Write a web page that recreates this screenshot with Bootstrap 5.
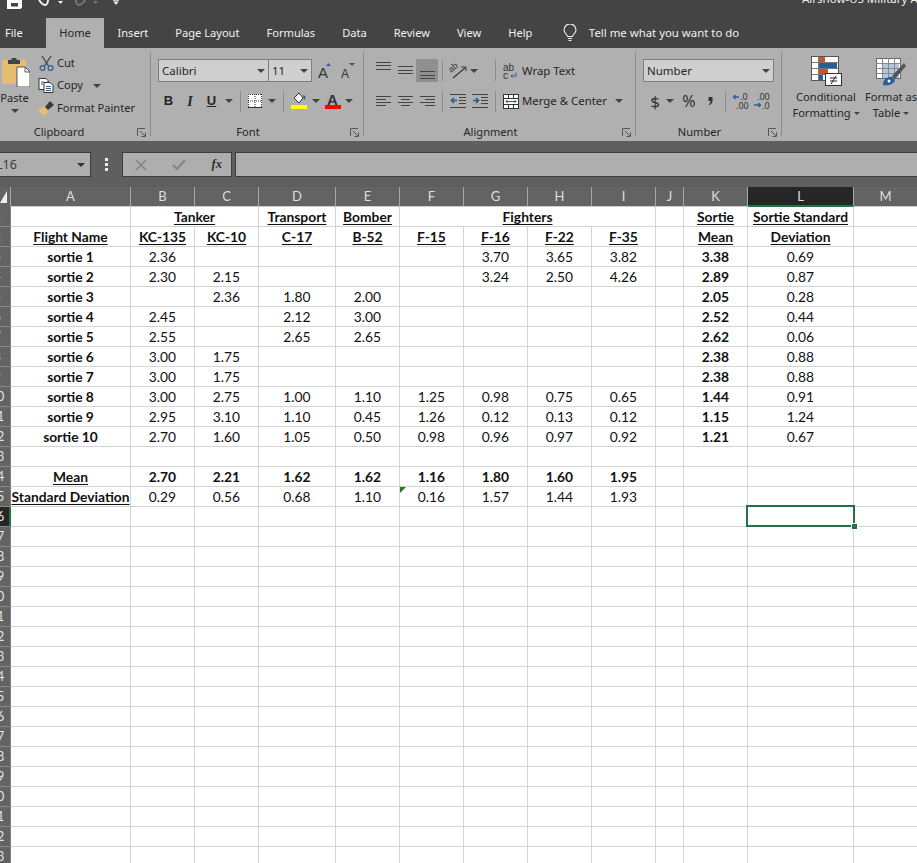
<!DOCTYPE html>
<html lang="en">
<head>
<meta charset="utf-8">
<title>Airshow-US Military Aircraft</title>
<link href="https://cdn.jsdelivr.net/npm/bootstrap@5.3.0/dist/css/bootstrap.min.css" rel="stylesheet">
<style>
html,body{height:863px;overflow:hidden;background:#fff}
body{font-family:"Noto Sans","Open Sans",sans-serif;font-size:11.1px;color:#262626}
svg{display:block;flex:none}
.title-bar{height:18px;background:#444;overflow:hidden;padding-left:7px;color:#eee}
.qa-undo{margin-left:16px}.qa-redo{margin-left:11px}.qa-more{margin-left:15px}.qa-tick{margin-left:7px;margin-top:1px}
.doc-name{margin-left:auto;margin-top:-10px;font-size:11.5px;line-height:18px;white-space:nowrap;width:115px;flex:none;overflow:hidden}
.tab-bar{height:30px;background:#444;flex-wrap:nowrap}
.tab-bar .nav-link{color:#f1f1f1;padding:0 13.5px;line-height:30px;font-size:11.1px;height:30px}
.tab-bar .tab-file{padding:0 23px 0 5px;width:46px}
.tab-bar .tab-home{background:#b0b0b0;color:#262626;width:58px;padding:0;text-align:center}
.tab-tell{color:#f1f1f1;font-size:11.4px;margin-left:17px;gap:12px;height:30px}
.ribbon{height:93px;background:#b0b0b0;padding-top:4px;overflow:hidden}
.rb-group{height:84px;border-right:1px solid #8d8d8d;flex:none}
.g-clip{width:151px}.g-font{width:213px}.g-align{width:272px}.g-num{width:146px}.g-style{width:135px;border-right:0}
.rb-body{height:72px}
.rb-foot{height:16px;margin-bottom:-4px;line-height:16px}
.rb-label{flex:1;text-align:center}
.g-clip .rb-label{padding-right:14px}
.launch{width:18px;display:flex;align-items:center;justify-content:center}
.paste-col{width:32px;padding-top:5px}
.paste-txt{line-height:14px;margin-top:4px;text-align:center;width:29px}
.paste-col .crt{display:block;margin:4px 0 0 11px}
.clip-col{margin-left:5px}
.clip-row{height:22.5px;gap:2px;white-space:nowrap}
.clip-ico{width:18px;display:flex;justify-content:center}
.crt{display:inline-block;width:0;height:0;border:4px solid transparent;border-top-color:#444;border-bottom:0;flex:none}
.cbx{height:23px;background:#cfcfcf;border:1px solid #7e7e7e;padding:0 3px;font-size:11.5px;line-height:21px;color:#262626;justify-content:space-between}
.cbx-font{width:111px}.cbx-size{width:44px;margin-left:-1px}.cbx-num{width:131px}
.tool-grid{display:grid;align-items:center;justify-items:center;justify-content:start}
.font-r1{padding:7px 0 0 7px}
.a-big{margin-left:6px}.a-small{margin-left:9px}
.font-r2{margin:8px 0 0 7px;height:22px;grid-template-columns:21px 22px 21px 14px 8px 22px 12px 10px 22px 11px 23px 10px}
.sep{width:1px;height:21px;background:#8d8d8d}
.fb{font-family:"Liberation Sans",sans-serif;font-weight:700;font-size:13px}
.fi{font-family:"Liberation Serif",serif;font-style:italic;font-weight:700;font-size:14px}
.fu{font-family:"Liberation Sans",sans-serif;font-weight:700;font-size:13px;text-decoration:underline}
.al-r1{margin:7px 0 0 8px;height:23px;grid-template-columns:22px 22px 22px 8px 24px 8px 13px 8px 23px auto}
.al-r2{margin:8px 0 0 8px;height:22px;grid-template-columns:22px 22px 22px 8px 23px 22px 8px 23px auto 24px}
.al-on{background:#8f8f8f;width:22px;height:23px;display:flex;align-items:center;justify-content:center}
.tool-txt{justify-self:start;white-space:nowrap;font-size:11.4px}
.num-r1{padding:7px 0 0 7px}
.num-r2{margin:8px 0 0 11px;height:22px;grid-template-columns:16px 14px 24px 18px 12px 20px 22px}
.dollar{font-size:17px;line-height:1;color:#333}.percent{font-size:16px;line-height:1;color:#333}
.dec-t{font:9px "Noto Sans",sans-serif;fill:#333}
.style-col{flex:none;text-align:center;line-height:16px;white-space:nowrap}
.sc-1{width:76px;margin-left:6px}.sc-2{width:54px}
.style-col svg{margin:4px auto 3px}
.style-col .crt{border-width:3px;border-bottom:0;vertical-align:2px;margin-left:3px}
.formula-bar{height:46px;background:#5f5f5f;padding-top:11px;align-items:flex-start}
.fbox{height:25px;background:#aeaeae;border:1px solid #3d3d3d}
.name-box{width:91px;border-left:0;font-size:12.5px;line-height:23px;color:#3c3c3c;justify-content:space-between;padding-right:5px;overflow:hidden}
.name-txt{margin-left:-4px}
.name-box .crt{border-top-color:#333}
.vdots{width:31px;height:25px}
.fx-box{width:110px;margin-right:3px;padding:0 9px 0 12px;justify-content:space-between}
.fx-txt{font:italic 700 12.5px/1 "Liberation Serif",serif;color:#2f2f2f}
.fml-input{flex:1;border-right:0}
.sheet.table{--bs-table-bg:transparent;margin:0;table-layout:fixed;width:918px;border-collapse:separate;border-spacing:0;font-family:Lato,"Open Sans",sans-serif;font-size:13.8px;color:#111}
.sheet.table>*>*>*{padding:0;height:20px;line-height:19px;border:0;border-right:1px solid #d4d4d4;border-bottom:1px solid #d4d4d4;text-align:center;white-space:nowrap;color:#111;box-shadow:none;vertical-align:middle;overflow:visible}
.sheet.table thead th{background:#636363;color:#dedede;font-weight:400;font-size:13px;border-right:1px solid #a8a8a8;border-bottom:1px solid #d0d0d0}
.sheet.table thead th.col-on{background:#262626;border-bottom:2px solid #217346;line-height:18px}
.sheet.table thead th.corner{border-bottom-color:#636363;overflow:hidden;text-align:left}
.sheet.table tbody th.rownum{background:#636363;color:#e4e4e4;font-weight:400;font-size:12.5px;overflow:hidden;border-right:1px solid #808080;border-bottom:1px solid #8a8a8a}
.sheet.table tbody th.row-on{background:#262626;border-right:2px solid #217346}
.rownum span{display:block;width:24px;margin-left:-15px;text-align:center}
.sheet.table tbody .hd{font-weight:700;text-decoration:underline;text-underline-offset:2px}
.sheet.table tbody .bd{font-weight:700}
.sheet.table tbody td.anchor{position:relative}
.err-flag{position:absolute;left:0;top:0;width:0;height:0;border-top:6px solid #1e7e1e;border-right:6px solid transparent}
.sel-box{position:absolute;left:-2px;top:-2px;width:109px;height:22px;border:2px solid #217346}
.sel-handle{position:absolute;right:-4px;bottom:-4px;width:5px;height:5px;background:#217346;outline:1px solid #fff}
</style>
</head>
<body>

<div class="title-bar d-flex align-items-start">
  <svg width="15" height="9" viewBox="0 0 15 9"><path d="M0 0h15v7.500L13.500 9H0z" fill="#fff"/><rect x="4" y="3" width="7" height="3.500" fill="#444"/></svg>
  <svg class="qa-undo" width="13" height="9" viewBox="0 0 13 9"><path d="M1 0c2 3 4 5 6 5s3-3 3-5" fill="none" stroke="#eee" stroke-width="2"/></svg>
  <svg class="qa-tick" width="5" height="3" viewBox="0 0 5 3"><path d="M0 0h5L2.500 3z" fill="#eee"/></svg>
  <svg class="qa-redo" width="12" height="9" viewBox="0 0 12 9"><path d="M11 0C9 3 7 5 5 5S2 2 2 0" fill="none" stroke="#777" stroke-width="2"/></svg>
  <svg class="qa-tick" width="5" height="3" viewBox="0 0 5 3"><path d="M0 0h5L2.500 3z" fill="#777"/></svg>
  <svg class="qa-more" width="6" height="5" viewBox="0 0 6 5"><path d="M0 0h6v.800H0zM.300 1.500h5.400L3 5z" fill="#eee"/></svg>
  <div class="doc-name">Airshow-US Military Aircraft</div>
</div>

<ul class="nav tab-bar align-items-center">
  <li class="nav-item"><a class="nav-link tab-file" href="#">File</a></li>
  <li class="nav-item"><a class="nav-link tab-home" href="#">Home</a></li>
  <li class="nav-item"><a class="nav-link" href="#">Insert</a></li>
  <li class="nav-item"><a class="nav-link" href="#">Page Layout</a></li>
  <li class="nav-item"><a class="nav-link" href="#">Formulas</a></li>
  <li class="nav-item"><a class="nav-link" href="#">Data</a></li>
  <li class="nav-item"><a class="nav-link" href="#">Review</a></li>
  <li class="nav-item"><a class="nav-link" href="#">View</a></li>
  <li class="nav-item"><a class="nav-link" href="#">Help</a></li>
  <li class="nav-item d-flex align-items-center tab-tell">
    <svg width="14" height="18" viewBox="0 0 14 18"><path d="M4.500 12.500C4 10 1 9 1 6a6 6 0 0 1 12 0c0 3-3 4-3.500 6.500zM5 14.500h4M5.500 16.500h3" fill="none" stroke="#f1f1f1" stroke-width="1.100"/></svg>
    <span>Tell me what you want to do</span>
  </li>
</ul>

<div class="ribbon d-flex">
  <!-- Clipboard -->
  <section class="rb-group g-clip d-flex flex-column">
    <div class="rb-body d-flex">
      <div class="paste-col">
        <svg width="30" height="30" viewBox="0 0 30 30"><rect x="2" y="3" width="24" height="24" rx="1" fill="#e5bd70"/><path d="M8 3h3l1-2h4l1 2h3v4H8z" fill="#444"/><path d="M17 10h8l5 5v15H17z" fill="#fff" stroke="#333" stroke-width=".8"/><path d="M25 10v5h5" fill="none" stroke="#333" stroke-width=".8"/></svg>
        <div class="paste-txt">Paste</div>
        <span class="crt"></span>
      </div>
      <div class="clip-col">
        <div class="clip-row d-flex align-items-center"><span class="clip-ico"><svg width="15" height="15" viewBox="0 0 15 15"><path d="M3 0l6.500 10M12 0L5.500 10" stroke="#444" stroke-width="1.300"/><circle cx="3.500" cy="12" r="2.400" fill="none" stroke="#2b5d9b" stroke-width="1.200"/><circle cx="11.500" cy="12" r="2.400" fill="none" stroke="#2b5d9b" stroke-width="1.200"/></svg></span><span>Cut</span></div>
        <div class="clip-row d-flex align-items-center"><span class="clip-ico"><svg width="16" height="15" viewBox="0 0 16 15"><path d="M1 .5h7l2 2v9H1z" fill="#fff" stroke="#333"/><path d="M6 4.500h6l3 3v7H6z" fill="#fff" stroke="#333"/><path d="M8 8.500h5M8 10.500h5M8 12.500h5M3 4h3M3 6h2" stroke="#2b5d9b"/></svg></span><span>Copy</span><span class="crt ms-2"></span></div>
        <div class="clip-row d-flex align-items-center"><span class="clip-ico"><svg width="16" height="15" viewBox="0 0 16 15"><path d="M0 9l6-4 5 6-6 4z" fill="#e5bd70"/><path d="M7 6l5-6 4 4-6 5z" fill="#3a3a3a"/></svg></span><span>Format Painter</span></div>
      </div>
    </div>
    <div class="rb-foot d-flex"><span class="rb-label">Clipboard</span><span class="launch"><svg width="9" height="9" viewBox="0 0 9 9"><path d="M.5 8V.5H8M3 3l5 5M4.500 8.500h4v-4" fill="none" stroke="#555"/></svg></span></div>
  </section>

  <!-- Font -->
  <section class="rb-group g-font d-flex flex-column">
    <div class="rb-body">
      <div class="font-r1 d-flex align-items-center">
        <div class="cbx cbx-font d-flex align-items-center"><span>Calibri</span><span class="crt"></span></div>
        <div class="cbx cbx-size d-flex align-items-center"><span>11</span><span class="crt"></span></div>
        <svg class="a-big" width="14" height="16" viewBox="0 0 14 16"><text x="0" y="15" font-family="Liberation Sans" font-size="15" fill="#333">A</text><path d="M8 3l2.500-3L13 3z" fill="#2b5d9b"/></svg>
        <svg class="a-small" width="14" height="16" viewBox="0 0 14 16"><text x="0" y="15" font-family="Liberation Sans" font-size="12" fill="#333">A</text><path d="M8 0h6l-3 3z" fill="#2b5d9b"/></svg>
      </div>
      <div class="font-r2 tool-grid">
        <span class="fb">B</span><span class="fi">I</span><span class="fu">U</span><span class="crt"></span><span class="sep"></span>
        <svg width="14" height="14" viewBox="0 0 14 14"><rect width="14" height="14" fill="#fff"/><path d="M0 .5h14M.5 0v14M13.500 0v14M7 0v14M0 7h14" stroke="#333" stroke-dasharray="1 1"/><path d="M0 13.500h14" stroke="#333"/></svg>
        <span class="crt"></span><span class="sep"></span>
        <svg width="16" height="18" viewBox="0 0 16 18"><path d="M3 6l5-5 4 5-4 5z" fill="#fff" stroke="#333"/><path d="M12 3c3 0 3 4 1 5z" fill="#2b5d9b"/><rect y="13" width="16" height="4" fill="#ff0"/></svg>
        <span class="crt"></span>
        <svg width="16" height="18" viewBox="0 0 16 18"><text x="2" y="12.500" font-family="Liberation Sans" font-weight="700" font-size="15" fill="#333">A</text><rect y="13" width="16" height="4" fill="#f00"/></svg>
        <span class="crt"></span>
      </div>
    </div>
    <div class="rb-foot d-flex"><span class="rb-label">Font</span><span class="launch"><svg width="9" height="9" viewBox="0 0 9 9"><path d="M.5 8V.5H8M3 3l5 5M4.500 8.500h4v-4" fill="none" stroke="#555"/></svg></span></div>
  </section>

  <!-- Alignment -->
  <section class="rb-group g-align d-flex flex-column">
    <div class="rb-body">
      <div class="al-r1 tool-grid">
        <svg width="15" height="23" viewBox="0 0 15 23"><path d="M0 3.500h15M0 6.500h15M0 10.500h15" stroke="#444"/></svg>
        <svg width="15" height="23" viewBox="0 0 15 23"><path d="M0 7.500h15M0 11.500h15M0 14.500h15" stroke="#444"/></svg>
        <span class="al-on"><svg width="15" height="23" viewBox="0 0 15 23"><path d="M0 12.500h15M0 16.500h15M0 19.500h15" stroke="#444"/></svg></span>
        <span class="sep"></span>
        <svg width="18" height="16" viewBox="0 0 18 16"><text transform="translate(2 10) rotate(-40)" font-family="Liberation Sans" font-size="9" fill="#333">ab</text><path d="M4 15L16 5" stroke="#333" stroke-width="1.100"/><path d="M12 4h5v4" fill="none" stroke="#333"/></svg>
        <span class="crt"></span><span></span><span class="sep"></span>
        <svg width="15" height="16" viewBox="0 0 15 16"><text x="0" y="7.500" font-family="Liberation Sans" font-size="10" fill="#333">ab</text><text x="0" y="15.500" font-family="Liberation Sans" font-size="10.500" fill="#333">c</text><path d="M13 9.500v3.500H8m1.500-1.500L8 13l1.500 1.500" fill="none" stroke="#2b5d9b"/></svg>
        <span class="tool-txt">Wrap Text</span>
      </div>
      <div class="al-r2 tool-grid">
        <svg width="15" height="11" viewBox="0 0 15 11"><path d="M0 .5h15M0 3.500h10M0 6.500h15M0 9.500h10" stroke="#444"/></svg>
        <svg width="15" height="11" viewBox="0 0 15 11"><path d="M0 .5h15M3 3.500h9M0 6.500h15M3 9.500h9" stroke="#444"/></svg>
        <svg width="15" height="11" viewBox="0 0 15 11"><path d="M0 .5h15M5 3.500h10M0 6.500h15M5 9.500h10" stroke="#444"/></svg>
        <span class="sep"></span>
        <svg width="16" height="14" viewBox="0 0 16 14"><path d="M0 .5h16M9 3.500h7M9 6.500h7M9 9.500h7M0 13.500h16" stroke="#444"/><path d="M7 6.500H1.500m2.500-2.500L1.500 6.500 4 9" fill="none" stroke="#2b5d9b" stroke-width="1.700"/></svg>
        <svg width="16" height="14" viewBox="0 0 16 14"><path d="M0 .5h16M9 3.500h7M9 6.500h7M9 9.500h7M0 13.500h16" stroke="#444"/><path d="M1 6.500h5.500M4 4l2.500 2.500L4 9" fill="none" stroke="#2b5d9b" stroke-width="1.700"/></svg>
        <span class="sep"></span>
        <svg width="16" height="15" viewBox="0 0 16 15"><rect x=".5" y=".5" width="15" height="14" fill="#fff" stroke="#333"/><path d="M0 4.500h16M0 10.500h16M5.500 0v4M10.500 0v4M5.500 11v4M10.500 11v4" stroke="#333"/><path d="M3 7.500h10M4.500 6L3 7.500 4.500 9M11.500 6L13 7.500 11.500 9" fill="none" stroke="#2b5d9b"/></svg>
        <span class="tool-txt">Merge &amp; Center</span>
        <span class="crt"></span>
      </div>
    </div>
    <div class="rb-foot d-flex"><span class="rb-label">Alignment</span><span class="launch"><svg width="9" height="9" viewBox="0 0 9 9"><path d="M.5 8V.5H8M3 3l5 5M4.500 8.500h4v-4" fill="none" stroke="#555"/></svg></span></div>
  </section>

  <!-- Number -->
  <section class="rb-group g-num d-flex flex-column">
    <div class="rb-body">
      <div class="num-r1"><div class="cbx cbx-num d-flex align-items-center"><span>Number</span><span class="crt"></span></div></div>
      <div class="num-r2 tool-grid">
        <span class="dollar">$</span><span class="crt"></span><span class="percent">%</span>
        <svg width="5" height="8" viewBox="0 0 5 8"><path d="M.5 0h4v3.500C4.500 6 3 7.500 1 8l-.3-.8C2 6.500 2.500 5.500 2.500 4H.5z" fill="#333"/></svg>
        <span class="sep"></span>
        <svg width="18" height="16" viewBox="0 0 18 16"><path d="M7 4H1.500m2-2l-2 2 2 2" fill="none" stroke="#2b5d9b" stroke-width="1.300"/><text class="dec-t" x="8" y="7">.0</text><text class="dec-t" x="4" y="15.500">.00</text></svg>
        <svg width="18" height="16" viewBox="0 0 18 16"><text class="dec-t" x="4" y="7">.00</text><path d="M1 12h6.500M5.500 10l2 2-2 2" fill="none" stroke="#2b5d9b" stroke-width="1.300"/><text class="dec-t" x="9" y="15.500">.0</text></svg>
      </div>
    </div>
    <div class="rb-foot d-flex"><span class="rb-label">Number</span><span class="launch"><svg width="9" height="9" viewBox="0 0 9 9"><path d="M.5 8V.5H8M3 3l5 5M4.500 8.500h4v-4" fill="none" stroke="#555"/></svg></span></div>
  </section>

  <!-- Styles -->
  <section class="rb-group g-style d-flex">
    <div class="style-col sc-1">
      <svg width="31" height="30" viewBox="0 0 31 30"><rect x=".5" y=".5" width="27" height="24" fill="#fff" stroke="#555"/><rect x="8" y="1" width="6" height="5" fill="#c4552c"/><rect x="8" y="7" width="18" height="5" fill="#2b5d9b"/><rect x="8" y="13" width="9" height="5" fill="#c4552c"/><rect x="8" y="19" width="4" height="5" fill="#2b5d9b"/><path d="M7.500 0v25M0 6.500h28M0 12.500h28M0 18.500h28" stroke="#777"/><rect x="14.500" y="17.500" width="16" height="12" fill="#fff" stroke="#333"/><path d="M19 22h7M19 25h7M25 20l-5 8" stroke="#222"/></svg>
      <div>Conditional</div><div>Formatting<span class="crt"></span></div>
    </div>
    <div class="style-col sc-2">
      <svg width="30" height="30" viewBox="0 0 30 30"><rect x=".5" y="2.500" width="24" height="20" fill="#fff" stroke="#666"/><rect x="7" y="8" width="16" height="14" fill="#b4c6de"/><path d="M6.500 2v21M12.500 2v21M18.500 2v21M0 7.500h25M0 12.500h25M0 17.500h25" stroke="#888"/><path d="M16 20l12-13 2 3-11 13z" fill="#555"/><path d="M7 29c0-5 4-9 10-8l2 3c-1 4-6 6-12 5z" fill="#2b5d9b"/><circle cx="13" cy="25" r="1.500" fill="#fff"/></svg>
      <div>Format as</div><div>Table<span class="crt"></span></div>
    </div>
  </section>
</div>

<div class="formula-bar d-flex">
  <div class="fbox name-box d-flex align-items-center"><span class="name-txt">L16</span><span class="crt"></span></div>
  <div class="vdots d-flex align-items-center justify-content-center"><svg width="3" height="13" viewBox="0 0 3 13"><path d="M0 0h3v3H0zM0 5h3v3H0zM0 10h3v3H0z" fill="#eee"/></svg></div>
  <div class="fbox fx-box d-flex align-items-center">
    <svg width="12" height="12" viewBox="0 0 12 12"><path d="M1 1l10 10M11 1L1 11" stroke="#858585" stroke-width="1.700"/></svg>
    <svg width="14" height="12" viewBox="0 0 14 12"><path d="M1 6l4 4 8-9" fill="none" stroke="#858585" stroke-width="2.200"/></svg>
    <span class="fx-txt">fx</span>
  </div>
  <div class="fbox fml-input"></div>
</div>

<table class="table sheet">
  <colgroup><col style="width:11px"><col style="width:120px"><col style="width:64px"><col style="width:64px"><col style="width:77px"><col style="width:64px"><col style="width:64px"><col style="width:64px"><col style="width:64px"><col style="width:64px"><col style="width:28px"><col style="width:64px"><col style="width:106px"><col style="width:64px"></colgroup>
  <thead>
    <tr><th class="corner"><svg width="7" height="12" viewBox="0 0 7 12"><path d="M7 0v12H0z" fill="#eee"/></svg></th><th>A</th><th>B</th><th>C</th><th>D</th><th>E</th><th>F</th><th>G</th><th>H</th><th>I</th><th>J</th><th>K</th><th class="col-on">L</th><th>M</th></tr>
  </thead>
  <tbody>
    <tr><th class="rownum"><span>1</span></th><td></td><td colspan="2"><span class="hd">Tanker</span></td><td><span class="hd">Transport</span></td><td><span class="hd">Bomber</span></td><td colspan="4"><span class="hd">Fighters</span></td><td></td><td><span class="hd">Sortie</span></td><td><span class="hd">Sortie Standard</span></td><td></td></tr>
    <tr><th class="rownum"><span>2</span></th><td><span class="hd">Flight Name</span></td><td><span class="hd">KC-135</span></td><td><span class="hd">KC-10</span></td><td><span class="hd">C-17</span></td><td><span class="hd">B-52</span></td><td><span class="hd">F-15</span></td><td><span class="hd">F-16</span></td><td><span class="hd">F-22</span></td><td><span class="hd">F-35</span></td><td></td><td><span class="hd">Mean</span></td><td><span class="hd">Deviation</span></td><td></td></tr>
    <tr><th class="rownum"><span>3</span></th><td class="bd">sortie 1</td><td>2.36</td><td></td><td></td><td></td><td></td><td>3.70</td><td>3.65</td><td>3.82</td><td></td><td class="bd">3.38</td><td>0.69</td><td></td></tr>
    <tr><th class="rownum"><span>4</span></th><td class="bd">sortie 2</td><td>2.30</td><td>2.15</td><td></td><td></td><td></td><td>3.24</td><td>2.50</td><td>4.26</td><td></td><td class="bd">2.89</td><td>0.87</td><td></td></tr>
    <tr><th class="rownum"><span>5</span></th><td class="bd">sortie 3</td><td></td><td>2.36</td><td>1.80</td><td>2.00</td><td></td><td></td><td></td><td></td><td></td><td class="bd">2.05</td><td>0.28</td><td></td></tr>
    <tr><th class="rownum"><span>6</span></th><td class="bd">sortie 4</td><td>2.45</td><td></td><td>2.12</td><td>3.00</td><td></td><td></td><td></td><td></td><td></td><td class="bd">2.52</td><td>0.44</td><td></td></tr>
    <tr><th class="rownum"><span>7</span></th><td class="bd">sortie 5</td><td>2.55</td><td></td><td>2.65</td><td>2.65</td><td></td><td></td><td></td><td></td><td></td><td class="bd">2.62</td><td>0.06</td><td></td></tr>
    <tr><th class="rownum"><span>8</span></th><td class="bd">sortie 6</td><td>3.00</td><td>1.75</td><td></td><td></td><td></td><td></td><td></td><td></td><td></td><td class="bd">2.38</td><td>0.88</td><td></td></tr>
    <tr><th class="rownum"><span>9</span></th><td class="bd">sortie 7</td><td>3.00</td><td>1.75</td><td></td><td></td><td></td><td></td><td></td><td></td><td></td><td class="bd">2.38</td><td>0.88</td><td></td></tr>
    <tr><th class="rownum"><span>10</span></th><td class="bd">sortie 8</td><td>3.00</td><td>2.75</td><td>1.00</td><td>1.10</td><td>1.25</td><td>0.98</td><td>0.75</td><td>0.65</td><td></td><td class="bd">1.44</td><td>0.91</td><td></td></tr>
    <tr><th class="rownum"><span>11</span></th><td class="bd">sortie 9</td><td>2.95</td><td>3.10</td><td>1.10</td><td>0.45</td><td>1.26</td><td>0.12</td><td>0.13</td><td>0.12</td><td></td><td class="bd">1.15</td><td>1.24</td><td></td></tr>
    <tr><th class="rownum"><span>12</span></th><td class="bd">sortie 10</td><td>2.70</td><td>1.60</td><td>1.05</td><td>0.50</td><td>0.98</td><td>0.96</td><td>0.97</td><td>0.92</td><td></td><td class="bd">1.21</td><td>0.67</td><td></td></tr>
    <tr><th class="rownum"><span>13</span></th><td></td><td></td><td></td><td></td><td></td><td></td><td></td><td></td><td></td><td></td><td></td><td></td><td></td></tr>
    <tr><th class="rownum"><span>14</span></th><td><span class="hd">Mean</span></td><td class="bd">2.70</td><td class="bd">2.21</td><td class="bd">1.62</td><td class="bd">1.62</td><td class="bd">1.16</td><td class="bd">1.80</td><td class="bd">1.60</td><td class="bd">1.95</td><td></td><td></td><td></td><td></td></tr>
    <tr><th class="rownum"><span>15</span></th><td><span class="hd">Standard Deviation</span></td><td>0.29</td><td>0.56</td><td>0.68</td><td>1.10</td><td class="anchor"><i class="err-flag"></i>0.16</td><td>1.57</td><td>1.44</td><td>1.93</td><td></td><td></td><td></td><td></td></tr>
    <tr><th class="rownum row-on"><span>16</span></th><td></td><td></td><td></td><td></td><td></td><td></td><td></td><td></td><td></td><td></td><td></td><td class="anchor"><i class="sel-box"><i class="sel-handle"></i></i></td><td></td></tr>
    <tr><th class="rownum"><span>17</span></th><td></td><td></td><td></td><td></td><td></td><td></td><td></td><td></td><td></td><td></td><td></td><td></td><td></td></tr>
    <tr><th class="rownum"><span>18</span></th><td></td><td></td><td></td><td></td><td></td><td></td><td></td><td></td><td></td><td></td><td></td><td></td><td></td></tr>
    <tr><th class="rownum"><span>19</span></th><td></td><td></td><td></td><td></td><td></td><td></td><td></td><td></td><td></td><td></td><td></td><td></td><td></td></tr>
    <tr><th class="rownum"><span>20</span></th><td></td><td></td><td></td><td></td><td></td><td></td><td></td><td></td><td></td><td></td><td></td><td></td><td></td></tr>
    <tr><th class="rownum"><span>21</span></th><td></td><td></td><td></td><td></td><td></td><td></td><td></td><td></td><td></td><td></td><td></td><td></td><td></td></tr>
    <tr><th class="rownum"><span>22</span></th><td></td><td></td><td></td><td></td><td></td><td></td><td></td><td></td><td></td><td></td><td></td><td></td><td></td></tr>
    <tr><th class="rownum"><span>23</span></th><td></td><td></td><td></td><td></td><td></td><td></td><td></td><td></td><td></td><td></td><td></td><td></td><td></td></tr>
    <tr><th class="rownum"><span>24</span></th><td></td><td></td><td></td><td></td><td></td><td></td><td></td><td></td><td></td><td></td><td></td><td></td><td></td></tr>
    <tr><th class="rownum"><span>25</span></th><td></td><td></td><td></td><td></td><td></td><td></td><td></td><td></td><td></td><td></td><td></td><td></td><td></td></tr>
    <tr><th class="rownum"><span>26</span></th><td></td><td></td><td></td><td></td><td></td><td></td><td></td><td></td><td></td><td></td><td></td><td></td><td></td></tr>
    <tr><th class="rownum"><span>27</span></th><td></td><td></td><td></td><td></td><td></td><td></td><td></td><td></td><td></td><td></td><td></td><td></td><td></td></tr>
    <tr><th class="rownum"><span>28</span></th><td></td><td></td><td></td><td></td><td></td><td></td><td></td><td></td><td></td><td></td><td></td><td></td><td></td></tr>
    <tr><th class="rownum"><span>29</span></th><td></td><td></td><td></td><td></td><td></td><td></td><td></td><td></td><td></td><td></td><td></td><td></td><td></td></tr>
    <tr><th class="rownum"><span>30</span></th><td></td><td></td><td></td><td></td><td></td><td></td><td></td><td></td><td></td><td></td><td></td><td></td><td></td></tr>
    <tr><th class="rownum"><span>31</span></th><td></td><td></td><td></td><td></td><td></td><td></td><td></td><td></td><td></td><td></td><td></td><td></td><td></td></tr>
    <tr><th class="rownum"><span>32</span></th><td></td><td></td><td></td><td></td><td></td><td></td><td></td><td></td><td></td><td></td><td></td><td></td><td></td></tr>
    <tr><th class="rownum"><span>33</span></th><td></td><td></td><td></td><td></td><td></td><td></td><td></td><td></td><td></td><td></td><td></td><td></td><td></td></tr>
  </tbody>
</table>
<script src="https://cdn.jsdelivr.net/npm/bootstrap@5.3.0/dist/js/bootstrap.bundle.min.js"></script>
</body>
</html>
